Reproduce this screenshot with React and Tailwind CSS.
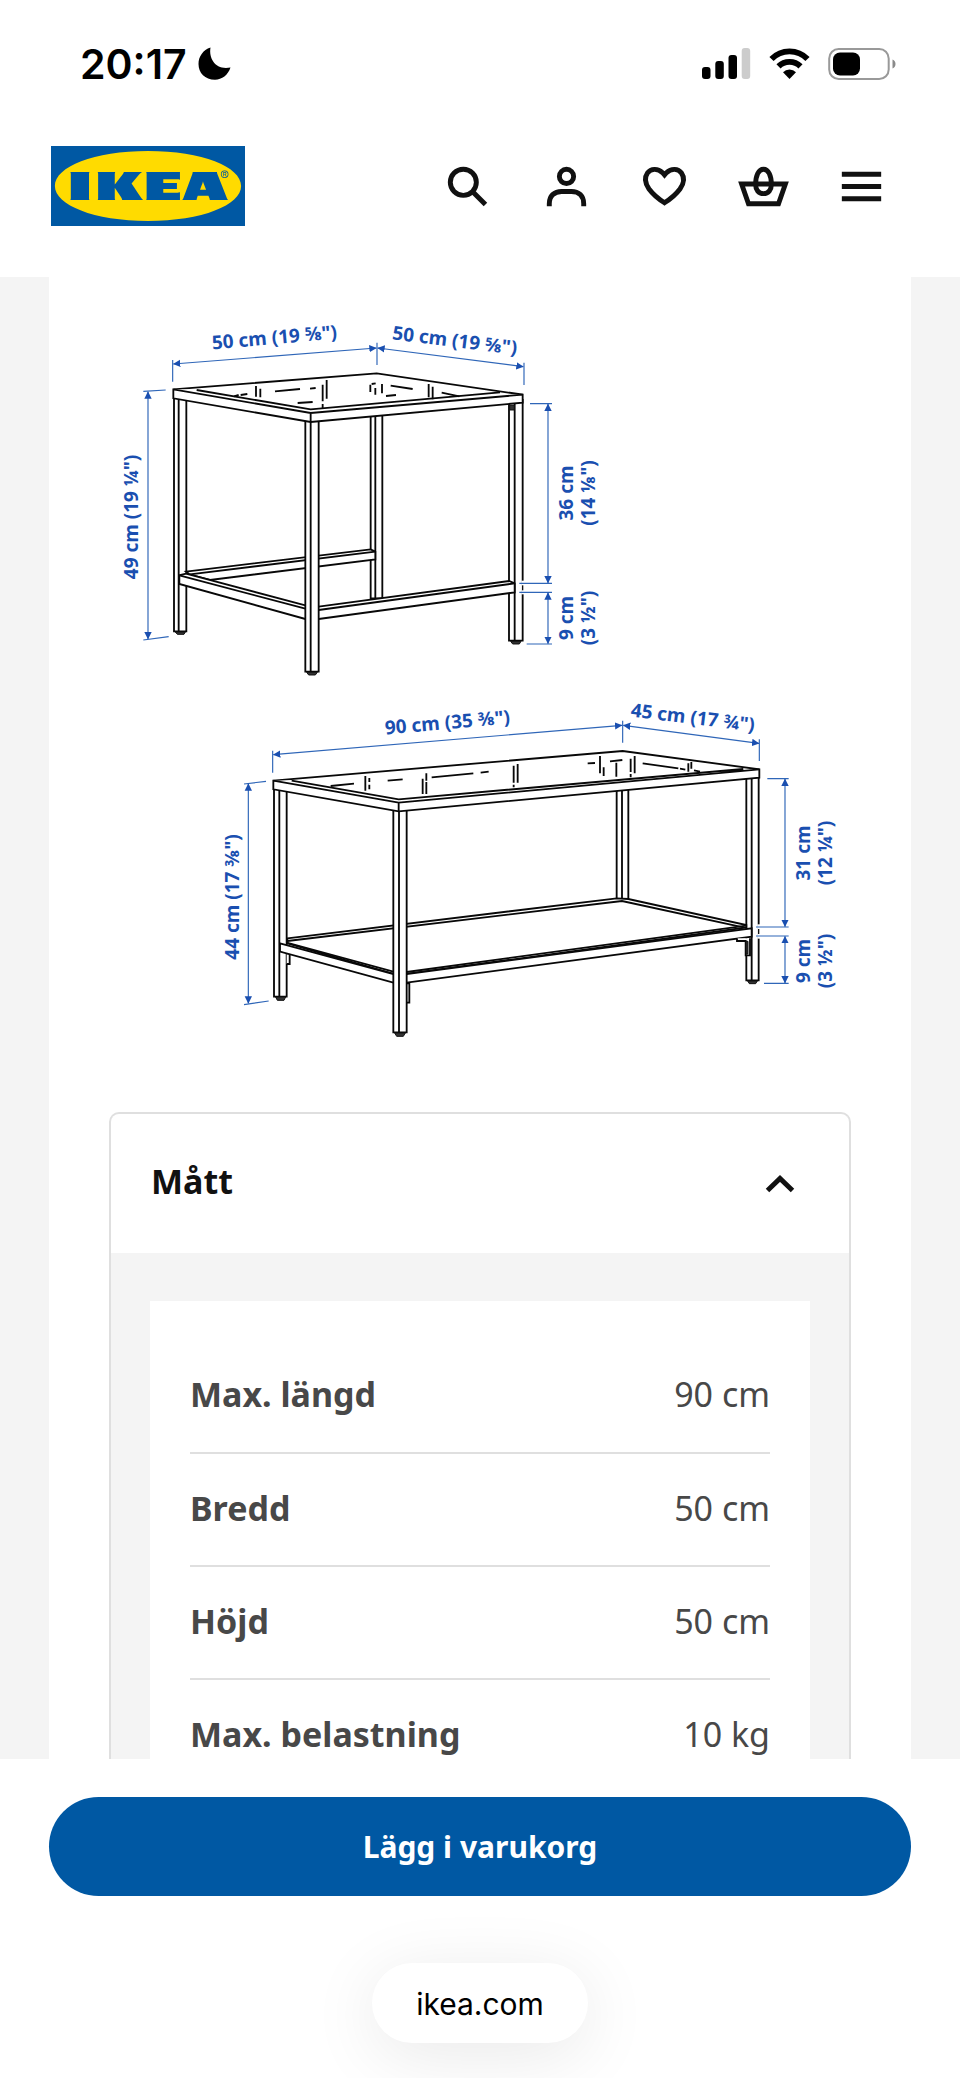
import React from "react";
import { SiIkea } from "react-icons/si";

const SPECS = [
  ["Max. längd", "90 cm"],
  ["Bredd", "50 cm"],
  ["Höjd", "50 cm"],
  ["Max. belastning", "10 kg"],
];

function StatusBar() {
  return (
    <div className="flex h-[127px] items-center justify-between pl-20 pr-16">
      <div className="flex items-center gap-[11px]">
        <time className="font-['Inter',sans-serif] text-[41px] leading-[50px] font-semibold text-black">20:17</time>
        <svg className="h-[34px] w-[34px]" viewBox="0 0 34 34" aria-hidden="true">
          <path d="M12.5.5C10.5 12 18 23.500 32.5 20.500C30 28 24 32.700 17 32.700C7 32.700 .5 26 .5 17C.5 9.500 5 3 12.500 .5Z" />
        </svg>
      </div>
      <div className="flex items-center gap-[18px]">
        <svg className="h-8 w-[49px]" viewBox="0 0 49 32" aria-hidden="true">
          <rect x="0" y="19" width="8.5" height="12" rx="3" />
          <rect x="13.300" y="13" width="8.5" height="18" rx="3" />
          <rect x="26.500" y="7" width="8.5" height="24" rx="3" />
          <rect x="39.700" y="0" width="8.5" height="31" rx="3" fill="#cccccc" />
        </svg>
        <svg className="h-8 w-[41px]" viewBox="0 0 41 32" aria-hidden="true">
          <path d="M2.500 11A25 25 0 0 1 38.500 11M9.500 18.400A15.500 15.500 0 0 1 31.500 18.400" fill="none" stroke="#000" strokeWidth="5.800" />
          <path d="M14 24.300A9 9 0 0 1 27 24.300L20.500 31Z" />
        </svg>
        <svg className="h-8 w-[68px]" viewBox="0 0 68 32" aria-hidden="true">
          <rect x="1.200" y="1" width="59.500" height="30" rx="9.500" fill="none" stroke="#999" strokeWidth="2" />
          <rect x="5" y="4.500" width="27" height="23" rx="7" />
          <path d="M64.500 11.500c4 1.500 4 7.500 0 9z" fill="#8a8a8a" />
        </svg>
      </div>
    </div>
  );
}

function IconButton({ label, children }) {
  return (
    <button type="button" aria-label={label} className="h-[59px] w-[59px]">
      <svg className="h-full w-full" viewBox="0 0 24 24" fill="none" stroke="#111" strokeWidth="2" aria-hidden="true">
        {children}
      </svg>
    </button>
  );
}

function Header() {
  return (
    <header className="flex h-[150px] items-center justify-between pb-10 pl-[51px] pr-[69px] pt-2">
      <a href="#" aria-label="IKEA" className="flex h-20 w-[194px] items-center justify-center overflow-hidden border-3 border-[#0058a3] bg-[#ffdb00]">
        <SiIkea className="h-[194px] w-[194px] shrink-0 text-[#0058a3]" />
      </a>
      <nav className="flex w-[453px] justify-between">
        <IconButton label="Sök">
          <circle cx="10.300" cy="10.300" r="5.300" />
          <path d="M14 14l5.300 5.300" />
        </IconButton>
        <IconButton label="Logga in">
          <circle cx="12" cy="7.900" r="2.900" />
          <path d="M5 20v-1c0-3.200 2-5 5-5h4c3 0 5 1.800 5 5v1" />
        </IconButton>
        <IconButton label="Favoriter">
          <path d="M12 7.300L11.200 6.400C9.300 4.500 6.400 4.600 5.100 6.500C3.700 8.500 4.200 10.900 5.700 13C7.200 15 9.300 16.900 12 18.600C14.700 16.900 16.800 15 18.300 13C19.800 10.900 20.300 8.500 18.900 6.500C17.600 4.600 14.700 4.500 12.800 6.400Z" />
        </IconButton>
        <IconButton label="Varukorg">
          <path d="M3.100 11H20.900L18.100 19H5.900Z" />
          <path d="M12 5C10 5 8.800 7.500 8.800 11.200C8.800 13.400 10 14.900 12 14.900S15.200 13.400 15.200 11.200C15.200 7.500 14 5 12 5Z" />
        </IconButton>
        <IconButton label="Meny">
          <path d="M4 7h16M4 12h16M4 17h16" />
        </IconButton>
      </nav>
    </header>
  );
}

const arrows = { markerStart: "url(#arrow)", markerEnd: "url(#arrow)" };

function SideTable() {
  return (
    <g transform="translate(110 300) scale(.33333)">
      <g fill="#fff" stroke="#080808" strokeWidth="5.500">
        <path d="M782 340H817V895H782ZM796 340V897" />
        <path d="M192 290H229V994H192ZM206 298V994" />
        <path d="M1197 300H1238V1022H1197ZM1214 300V1022" />
        <path d="M228 815L782 748L796 755V778L300 840L240 824Z" />
        <path d="M240 823L796 755" />
        <path d="M228 821L586 916L626 920L1197 843L1214 850V877L626 957L586 957L208 852V826Z" />
        <path d="M208 826L586 926M626 930L1214 850" />
        <path d="M586 350H626V1115H586ZM602 350V1115" />
        <path d="M190 268L800 220L1238 284V308L602 366L190 295Z" />
        <path d="M190 268L602 339L1238 284M260 270L602 328L1170 277M602 339V366" />
        <path
          fill="none"
          d="M372 289L386 285M392 285L412 282M438 258V290M451 266V292M495 274L570 267M600 266L617 264M650 240V296M638 254V304M638 312V324M563 309L608 306M781 254V276M785 252L797 250M796 264V284M816 252V280M842 257L908 267M828 288L858 285M956 252V292M968 260V298M995 278L1048 289"
        />
      </g>
      <g fill="#333" stroke="#111" strokeWidth="3">
        <path d="M196 996H226L222 1003H202ZM590 1117H622L616 1125H596ZM1202 1024H1233L1228 1032H1208Z" />
        <path d="M1199 316H1213V330H1199Z" />
      </g>
      <path d="M1238 842V883" stroke="#fff" strokeWidth="8" />
      <path d="M1238 856V871" stroke="#111" strokeWidth="4" />
      <g fill="none" stroke="#2f66b8" strokeWidth="3.500">
        <path d="M188 180V245M801 128V195M1242 188V255M100 274L167 270M100 1020L176 1010M1260 311H1326M1228 850H1326M1228 877H1326M1250 1032H1326" />
        <path d="M190 192L799 144" {...arrows} />
        <path d="M803 144L1240 200" {...arrows} />
        <path d="M114 275V1017" {...arrows} />
        <path d="M1314 312V849" {...arrows} />
        <path d="M1314 878V1031" {...arrows} />
      </g>
    </g>
  );
}

function CoffeeTable() {
  return (
    <g transform="translate(210 680) scale(.33333)">
      <g fill="#fff" stroke="#080808" strokeWidth="5.500">
        <path d="M1220 320H1255V661H1220ZM1236 320V661" />
        <path d="M192 320H230V950H192ZM208 320V950" />
        <path d="M1609 290H1646V901H1609ZM1625 290V901" />
        <path d="M230 820H239V852H230M590 910H598V968H590" />
        <path d="M232 775L1220 655L1255 657L1609 735V742L590 882H550L232 790Z" />
        <path d="M232 783L1236 663L1600 742" />
        <path d="M210 790L550 882H590L1625 745V770L590 908H550L210 815Z" />
        <path d="M230 788L550 875M590 876L1609 737" />
        <path d="M550 380H590V1057H550ZM567 380V1057" />
        <path d="M190 302L1238 213L1648 268V293L566 394L190 328Z" />
        <path d="M190 302L566 368L1648 268M245 302L566 358L1600 267M566 368V394" />
        <path
          fill="none"
          d="M362 318L432 311M466 288V332M478 294V306M478 314V328M533 302L578 298M638 296V342M649 280V302M649 306V342M665 292L790 280M812 278L836 275M911 257V308M911 314V322M923 252V308M1133 250L1155 249M1170 228V280M1181 262V288M1200 244L1237 240M1219 248V290M1262 236V276M1262 282V292M1274 228V280M1298 250L1405 265M1410 266L1426 269M1435 250V275M1444 246V266M1452 271L1470 275"
        />
        <path d="M1581 775V783H1607V826H1620V775" />
      </g>
      <g fill="#333" stroke="#111" strokeWidth="3">
        <path d="M197 951H227L222 961H202ZM554 1059H586L580 1069H560ZM1613 903H1642L1637 911H1618Z" />
        <path d="M1608 784H1614V822H1608Z" />
      </g>
      <path d="M1646 733V776" stroke="#fff" strokeWidth="8" />
      <path d="M1646 747V762" stroke="#111" strokeWidth="4" />
      <g fill="none" stroke="#2f66b8" strokeWidth="3.500">
        <path d="M188 212V278M1238 122V188M1648 178V243M102 312L168 304M102 974L176 963M1672 296H1736M1638 741H1736M1638 768H1736M1662 910H1736" />
        <path d="M190 224L1236 136" {...arrows} />
        <path d="M1240 136L1647 190" {...arrows} />
        <path d="M115 311V970" {...arrows} />
        <path d="M1725 297V740" {...arrows} />
        <path d="M1725 769V909" {...arrows} />
      </g>
    </g>
  );
}

const LABELS = [
  [275, 344, -5, '50 cm (19 ⅝")'],
  [454, 347, 7, '50 cm (19 ⅝")'],
  [138, 517, -90, '49 cm (19 ¼")'],
  [573, 493, -90, "36 cm"],
  [595, 493, -90, '(14 ⅛")'],
  [573, 618, -90, "9 cm"],
  [595, 618, -90, '(3 ½")'],
  [448, 729, -5, '90 cm (35 ⅜")'],
  [692, 724, 7, '45 cm (17 ¾")'],
  [239, 897, -90, '44 cm (17 ⅜")'],
  [810, 853, -90, "31 cm"],
  [832, 853, -90, '(12 ¼")'],
  [810, 961, -90, "9 cm"],
  [832, 961, -90, '(3 ½")'],
];

function Measurements() {
  return (
    <svg className="block w-full" viewBox="49 277 862 835" role="img" aria-label="Måttskiss över satsbord">
      <defs>
        <marker id="arrow" markerUnits="userSpaceOnUse" markerWidth="22" markerHeight="24" refX="21" refY="12" orient="auto-start-reverse">
          <path d="M0 1L22 12L0 23Z" fill="#1a4fb0" />
        </marker>
      </defs>
      <SideTable />
      <CoffeeTable />
      <g className="font-['Noto_Sans',sans-serif] text-[19px] font-bold" fill="#1a4fb0" textAnchor="middle">
        {LABELS.map(([x, y, angle, text]) => (
          <text key={`${x}-${y}`} transform={`translate(${x} ${y}) rotate(${angle})`}>
            {text}
          </text>
        ))}
      </g>
    </svg>
  );
}

function Specs() {
  return (
    <section className="mx-[60px] rounded-t-[10px] border-2 border-b-0 border-[#dfdfdf]">
      <h2>
        <button type="button" aria-expanded="true" className="flex h-[139px] w-full items-center justify-between pl-10 pr-[54px] text-left text-[34px] leading-[50px] font-bold text-[#111]">
          <span className="pb-1.5">Mått</span>
          <svg className="h-[18px] w-[30px]" viewBox="0 0 30 18" fill="none" stroke="#111" strokeWidth="5" aria-hidden="true">
            <path d="M2.500 15.500L15 3.500L27.500 15.500" />
          </svg>
        </button>
      </h2>
      <div className="bg-[#f4f4f4] px-[39px] pt-12">
        <div className="bg-white px-10 pt-[39px]">
          <table className="w-full border-collapse text-[34px] leading-[50px] text-[#484848]">
            <tbody>
              {SPECS.map(([name, value]) => (
                <tr key={name} className="h-[113px] border-b-2 border-[#dfdfdf]">
                  <th scope="row" className="px-0 pt-0 pb-1 text-left font-bold">{name}</th>
                  <td className="px-0 pt-0 pb-1 text-right">{value}</td>
                </tr>
              ))}
            </tbody>
          </table>
        </div>
      </div>
    </section>
  );
}

export default function App() {
  return (
    <div className="flex h-screen flex-col bg-white font-['Noto_Sans',sans-serif]">
      <StatusBar />
      <Header />
      <main className="min-h-0 flex-1 overflow-hidden bg-[#f4f4f4] px-[49px]">
        <div className="bg-white">
          <Measurements />
          <Specs />
        </div>
      </main>
      <footer className="flex flex-col items-center overflow-hidden bg-white px-[49px] pb-[35px] pt-[38px]">
        <button type="button" className="h-[99px] w-full rounded-full bg-[#0058a3] text-[30px] leading-10 font-bold text-white">
          Lägg i varukorg
        </button>
        <button type="button" className="mt-[67px] h-20 w-[216px] rounded-full bg-white pt-0.5 font-['Inter',sans-serif] text-[30px] leading-10 text-black shadow-[0_12px_70px_rgba(0,0,0,0.09)]">
          ikea.com
        </button>
      </footer>
    </div>
  );
}
